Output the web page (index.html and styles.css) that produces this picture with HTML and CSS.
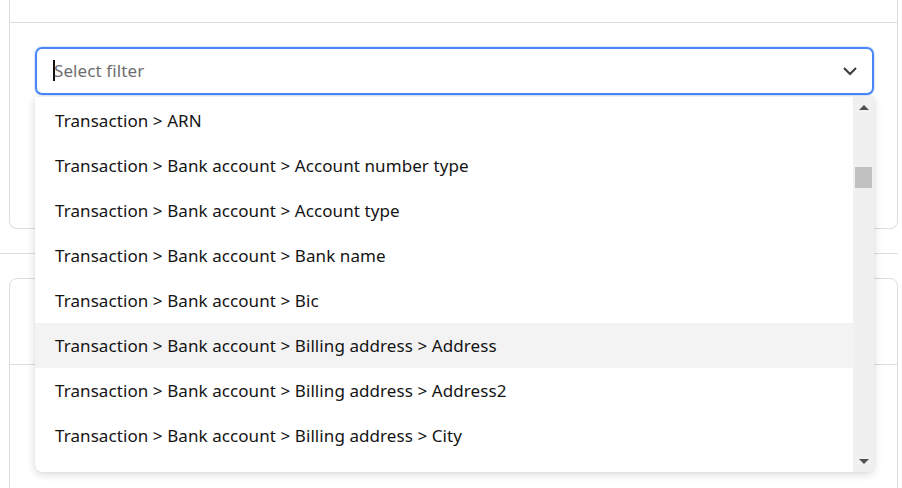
FILE: index.html
```html
<!DOCTYPE html>
<html>
<head>
<meta charset="utf-8">
<link rel="stylesheet" href="styles.css">
</head>
<body>
<div class="page">
  <section class="panel">
    <div class="panel-head"></div>
    <div class="panel-body">
      <div class="select-wrap">
        <div class="select">
          <span class="caret"></span><span class="placeholder">Select filter</span>
          <svg class="chev" width="16" height="10" viewBox="0 0 16 10"><path d="M2 2 L8 8 L14 2" fill="none" stroke="#3a3a3a" stroke-width="2"/></svg>
        </div>
        <div class="dropdown">
          <ul class="options">
            <li>Transaction &gt; ARN</li>
            <li>Transaction &gt; Bank account &gt; Account number type</li>
            <li>Transaction &gt; Bank account &gt; Account type</li>
            <li>Transaction &gt; Bank account &gt; Bank name</li>
            <li>Transaction &gt; Bank account &gt; Bic</li>
            <li class="active">Transaction &gt; Bank account &gt; Billing address &gt; Address</li>
            <li>Transaction &gt; Bank account &gt; Billing address &gt; Address2</li>
            <li>Transaction &gt; Bank account &gt; Billing address &gt; City</li>
          </ul>
          <div class="scrollbar">
            <span class="arrow up"></span>
            <span class="thumb"></span>
            <span class="arrow down"></span>
          </div>
        </div>
      </div>
    </div>
  </section>
  <div class="divider"></div>
  <section class="card">
    <div class="card-head"></div>
    <div class="card-body"></div>
  </section>
</div>
</body>
</html>
```
FILE: styles.css
```css
html, body {
  margin: 0;
  padding: 0;
  background: #ffffff;
  font-family: "Noto Sans", "Open Sans", sans-serif;
  overflow: hidden;
}
.page {
  width: 902px;
  height: 488px;
  overflow: hidden;
}
.panel {
  margin-left: 9px;
  width: 887px;
  border: 1px solid #dedede;
  border-top: none;
  border-radius: 0 0 8px 8px;
  height: 228px;
}
.panel-head {
  height: 22px;
  border-bottom: 1px solid #dedede;
}
.panel-body {
  padding: 24px 23px 0 25px;
}
.select-wrap {
  position: relative;
}
.select {
  height: 42px;
  border: 2px solid #4a86f7;
  border-radius: 7px;
  display: flex;
  align-items: center;
  padding: 0 14px 2px 16px;
  box-sizing: content-box;
  box-shadow: 0 0 0 1px rgba(74,134,247,0.18);
}
.caret {
  width: 2px;
  height: 21px;
  background: #111;
  margin-right: -1px;
}
.placeholder {
  font-size: 17px;
  color: #6e6e6e;
  flex: 1;
  letter-spacing: 0.1px;
}
.chev {
  display: block;
  margin-top: 2px;
}
.dropdown {
  position: absolute;
  left: 0;
  right: 0;
  top: 50px;
  height: 375px;
  background: #fff;
  border-radius: 0 0 7px 7px;
  box-shadow: 0 2px 8px rgba(0,0,0,0.16), 0 0 1px rgba(0,0,0,0.12);
  display: flex;
  overflow: hidden;
  z-index: 2;
}
.options {
  list-style: none;
  margin: 0;
  padding: 1px 0 0;
  flex: 1;
  overflow: hidden;
}
.options li {
  height: 45px;
  line-height: 45px;
  padding-left: 20px;
  font-size: 17px;
  color: #141414;
  white-space: nowrap;
  letter-spacing: 0.08px;
}
.options li.active {
  background: #f3f3f3;
}
.scrollbar {
  width: 21px;
  background: #f0f0f0;
  position: relative;
}
.arrow {
  position: absolute;
  left: 6px;
  width: 0;
  height: 0;
  border-left: 5px solid transparent;
  border-right: 5px solid transparent;
}
.arrow.up {
  top: 8px;
  border-bottom: 5px solid #505050;
}
.arrow.down {
  bottom: 8px;
  border-top: 5px solid #505050;
}
.thumb {
  position: absolute;
  left: 2px;
  right: 2px;
  top: 70px;
  height: 21px;
  background: #c1c1c1;
}
.divider {
  margin-top: 24px;
  width: 898px;
  border-top: 1px solid #dedede;
}
.card {
  margin: 24px 0 0 9px;
  width: 887px;
  height: 240px;
  border: 1px solid #dedede;
  border-radius: 8px;
}
.card-head {
  height: 85px;
  border-bottom: 1px solid #dedede;
}
```
